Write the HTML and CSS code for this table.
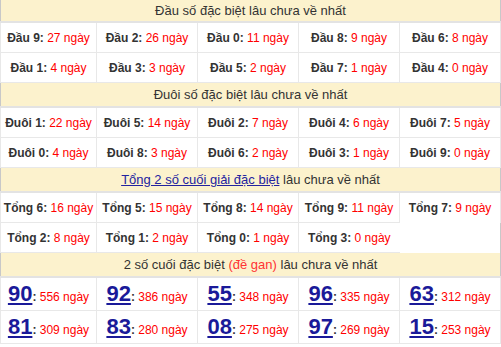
FILE: index.html
```html
<!DOCTYPE html>
<html>
<head>
<meta charset="utf-8">
<link rel="stylesheet" href="styles.css">
</head>
<body>
<table class="stats">
  <colgroup>
    <col class="c1"><col class="cn"><col class="cn"><col class="cn"><col class="cn">
  </colgroup>
  <tr><th colspan="5" class="head first">Đầu số đặc biệt lâu chưa về nhất</th></tr>
  <tr>
    <td><b>Đầu 9:</b> <span class="v">27 ngày</span></td>
    <td><b>Đầu 2:</b> <span class="v">26 ngày</span></td>
    <td><b>Đầu 0:</b> <span class="v">11 ngày</span></td>
    <td><b>Đầu 8:</b> <span class="v">9 ngày</span></td>
    <td><b>Đầu 6:</b> <span class="v">8 ngày</span></td>
  </tr>
  <tr>
    <td><b>Đầu 1:</b> <span class="v">4 ngày</span></td>
    <td><b>Đầu 3:</b> <span class="v">3 ngày</span></td>
    <td><b>Đầu 5:</b> <span class="v">2 ngày</span></td>
    <td><b>Đầu 7:</b> <span class="v">1 ngày</span></td>
    <td><b>Đầu 4:</b> <span class="v">0 ngày</span></td>
  </tr>
  <tr><th colspan="5" class="head">Đuôi số đặc biệt lâu chưa về nhất</th></tr>
  <tr>
    <td><b>Đuôi 1:</b> <span class="v">22 ngày</span></td>
    <td><b>Đuôi 5:</b> <span class="v">14 ngày</span></td>
    <td><b>Đuôi 2:</b> <span class="v">7 ngày</span></td>
    <td><b>Đuôi 4:</b> <span class="v">6 ngày</span></td>
    <td><b>Đuôi 7:</b> <span class="v">5 ngày</span></td>
  </tr>
  <tr>
    <td><b>Đuôi 0:</b> <span class="v">4 ngày</span></td>
    <td><b>Đuôi 8:</b> <span class="v">3 ngày</span></td>
    <td><b>Đuôi 6:</b> <span class="v">2 ngày</span></td>
    <td><b>Đuôi 3:</b> <span class="v">1 ngày</span></td>
    <td><b>Đuôi 9:</b> <span class="v">0 ngày</span></td>
  </tr>
  <tr><th colspan="5" class="head"><a href="#" class="link">Tổng 2 số cuối giải đặc biệt</a> lâu chưa về nhất</th></tr>
  <tr>
    <td><b>Tổng 6:</b> <span class="v">16 ngày</span></td>
    <td><b>Tổng 5:</b> <span class="v">15 ngày</span></td>
    <td><b>Tổng 8:</b> <span class="v">14 ngày</span></td>
    <td><b>Tổng 9:</b> <span class="v">11 ngày</span></td>
    <td class="open-bottom"><b>Tổng 7:</b> <span class="v">9 ngày</span></td>
  </tr>
  <tr>
    <td><b>Tổng 2:</b> <span class="v">8 ngày</span></td>
    <td><b>Tổng 1:</b> <span class="v">2 ngày</span></td>
    <td><b>Tổng 0:</b> <span class="v">1 ngày</span></td>
    <td class="open-right"><b>Tổng 3:</b> <span class="v">0 ngày</span></td>
  </tr>
  <tr><th colspan="5" class="head">2 số cuối đặc biệt <span class="gan">(đề gan)</span> lâu chưa về nhất</th></tr>
  <tr class="big">
    <td><a href="#" class="num">90</a><b>:</b> <span class="v">556 ngày</span></td>
    <td><a href="#" class="num">92</a><b>:</b> <span class="v">386 ngày</span></td>
    <td><a href="#" class="num">55</a><b>:</b> <span class="v">348 ngày</span></td>
    <td><a href="#" class="num">96</a><b>:</b> <span class="v">335 ngày</span></td>
    <td><a href="#" class="num">63</a><b>:</b> <span class="v">312 ngày</span></td>
  </tr>
  <tr class="big">
    <td><a href="#" class="num">81</a><b>:</b> <span class="v">309 ngày</span></td>
    <td><a href="#" class="num">83</a><b>:</b> <span class="v">280 ngày</span></td>
    <td><a href="#" class="num">08</a><b>:</b> <span class="v">275 ngày</span></td>
    <td><a href="#" class="num">97</a><b>:</b> <span class="v">269 ngày</span></td>
    <td><a href="#" class="num">15</a><b>:</b> <span class="v">253 ngày</span></td>
  </tr>
</table>
</body>
</html>
```
FILE: styles.css
```css
html, body {
  margin: 0;
  padding: 0;
  background: #fff;
}
body {
  font-family: "Liberation Sans", Arial, sans-serif;
  color: #333;
}
.stats {
  width: 501px;
  border-collapse: collapse;
  table-layout: fixed;
  border-left: 1px solid #c8c8c8;
  border-right: 1px solid #c8c8c8;
  border-bottom: 1px solid #c8c8c8;
}
.c1 {
  width: 96px;
}
.cn {
  width: 101px;
}
.stats th.head {
  background: #fcf2cd;
  font-weight: normal;
  font-size: 13px;
  color: #333;
  height: 23px;
  padding: 0;
  border-bottom: 2px solid #e3e3e3;
  text-align: center;
}
.stats th.first {
  height: 21px;
}
.stats td {
  border: 1px solid #e8e8e8;
  height: 29px;
  padding: 0;
  text-align: center;
  font-size: 12px;
  white-space: nowrap;
}
.stats td.open-bottom {
  border-bottom: none;
}
.stats td.open-right {
  border-right: none;
}
.stats td b {
  color: #333;
}
.v {
  color: #f00;
}
.link {
  color: #2323a0;
  text-decoration: underline;
}
.gan {
  color: #f33;
}
.big td {
  height: 32px;
}
.num {
  font-size: 22px;
  font-weight: bold;
  color: #1a1a99;
  text-decoration: underline;
}
```
